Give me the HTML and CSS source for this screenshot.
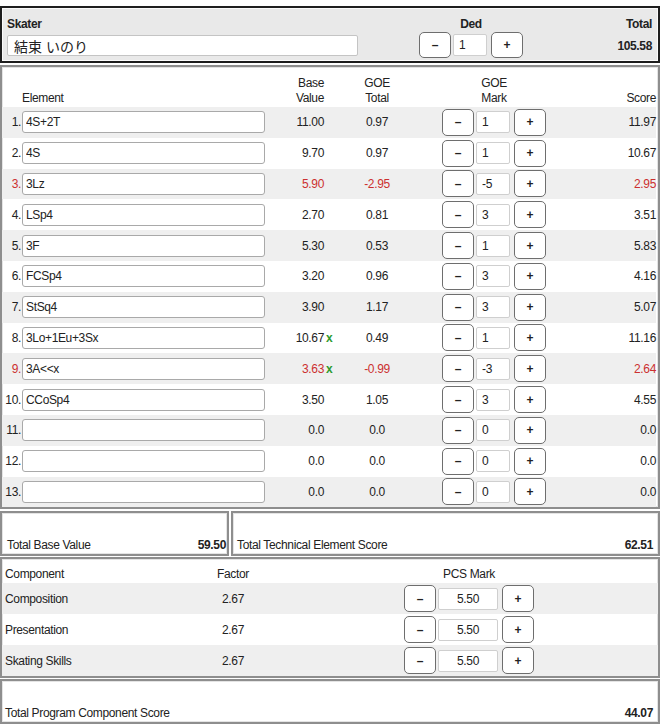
FILE: index.html
```html
<!DOCTYPE html>
<html lang="ja">
<head>
<meta charset="utf-8">
<title>Score Calculator</title>
<link rel="stylesheet" href="styles.css">
</head>
<body>
<div class="page">
  <div class="top">
    <div class="skater">
      <div class="lbl">Skater</div>
      <input class="name" type="text" value="結束 いのり">
    </div>
    <div class="ded">
      <div class="lbl">Ded</div>
      <div class="stepper">
        <button class="btn">–</button><input class="num-in ded-in" type="text" value="1"><button class="btn">+</button>
      </div>
    </div>
    <div class="total">
      <div class="lbl">Total</div>
      <div class="total-val">105.58</div>
    </div>
  </div>

  <div class="panel elements">
    <div class="erow head">
      <div></div>
      <div class="c-left">Element</div>
      <div class="c-right">Base<br>Value</div>
      <div></div>
      <div class="c-center">GOE<br>Total</div>
      <div class="c-center">GOE<br>Mark</div>
      <div class="c-right">Score</div>
    </div>

    <div class="erow alt">
      <div class="c-num">1.</div><input class="el-in" type="text" value="4S+2T">
      <div class="c-right">11.00</div><div class="xm"></div><div class="c-center">0.97</div>
      <div class="c-center"><div class="stepper"><button class="btn">–</button><input class="num-in" type="text" value="1"><button class="btn">+</button></div></div>
      <div class="c-right">11.97</div>
    </div>
    <div class="erow">
      <div class="c-num">2.</div><input class="el-in" type="text" value="4S">
      <div class="c-right">9.70</div><div class="xm"></div><div class="c-center">0.97</div>
      <div class="c-center"><div class="stepper"><button class="btn">–</button><input class="num-in" type="text" value="1"><button class="btn">+</button></div></div>
      <div class="c-right">10.67</div>
    </div>
    <div class="erow alt bad">
      <div class="c-num">3.</div><input class="el-in" type="text" value="3Lz">
      <div class="c-right">5.90</div><div class="xm"></div><div class="c-center">-2.95</div>
      <div class="c-center"><div class="stepper"><button class="btn">–</button><input class="num-in" type="text" value="-5"><button class="btn">+</button></div></div>
      <div class="c-right">2.95</div>
    </div>
    <div class="erow">
      <div class="c-num">4.</div><input class="el-in" type="text" value="LSp4">
      <div class="c-right">2.70</div><div class="xm"></div><div class="c-center">0.81</div>
      <div class="c-center"><div class="stepper"><button class="btn">–</button><input class="num-in" type="text" value="3"><button class="btn">+</button></div></div>
      <div class="c-right">3.51</div>
    </div>
    <div class="erow alt">
      <div class="c-num">5.</div><input class="el-in" type="text" value="3F">
      <div class="c-right">5.30</div><div class="xm"></div><div class="c-center">0.53</div>
      <div class="c-center"><div class="stepper"><button class="btn">–</button><input class="num-in" type="text" value="1"><button class="btn">+</button></div></div>
      <div class="c-right">5.83</div>
    </div>
    <div class="erow">
      <div class="c-num">6.</div><input class="el-in" type="text" value="FCSp4">
      <div class="c-right">3.20</div><div class="xm"></div><div class="c-center">0.96</div>
      <div class="c-center"><div class="stepper"><button class="btn">–</button><input class="num-in" type="text" value="3"><button class="btn">+</button></div></div>
      <div class="c-right">4.16</div>
    </div>
    <div class="erow alt">
      <div class="c-num">7.</div><input class="el-in" type="text" value="StSq4">
      <div class="c-right">3.90</div><div class="xm"></div><div class="c-center">1.17</div>
      <div class="c-center"><div class="stepper"><button class="btn">–</button><input class="num-in" type="text" value="3"><button class="btn">+</button></div></div>
      <div class="c-right">5.07</div>
    </div>
    <div class="erow">
      <div class="c-num">8.</div><input class="el-in" type="text" value="3Lo+1Eu+3Sx">
      <div class="c-right">10.67</div><div class="xm">x</div><div class="c-center">0.49</div>
      <div class="c-center"><div class="stepper"><button class="btn">–</button><input class="num-in" type="text" value="1"><button class="btn">+</button></div></div>
      <div class="c-right">11.16</div>
    </div>
    <div class="erow alt bad">
      <div class="c-num">9.</div><input class="el-in" type="text" value="3A&lt;&lt;x">
      <div class="c-right">3.63</div><div class="xm">x</div><div class="c-center">-0.99</div>
      <div class="c-center"><div class="stepper"><button class="btn">–</button><input class="num-in" type="text" value="-3"><button class="btn">+</button></div></div>
      <div class="c-right">2.64</div>
    </div>
    <div class="erow">
      <div class="c-num">10.</div><input class="el-in" type="text" value="CCoSp4">
      <div class="c-right">3.50</div><div class="xm"></div><div class="c-center">1.05</div>
      <div class="c-center"><div class="stepper"><button class="btn">–</button><input class="num-in" type="text" value="3"><button class="btn">+</button></div></div>
      <div class="c-right">4.55</div>
    </div>
    <div class="erow alt">
      <div class="c-num">11.</div><input class="el-in" type="text" value="">
      <div class="c-right">0.0</div><div class="xm"></div><div class="c-center">0.0</div>
      <div class="c-center"><div class="stepper"><button class="btn">–</button><input class="num-in" type="text" value="0"><button class="btn">+</button></div></div>
      <div class="c-right">0.0</div>
    </div>
    <div class="erow">
      <div class="c-num">12.</div><input class="el-in" type="text" value="">
      <div class="c-right">0.0</div><div class="xm"></div><div class="c-center">0.0</div>
      <div class="c-center"><div class="stepper"><button class="btn">–</button><input class="num-in" type="text" value="0"><button class="btn">+</button></div></div>
      <div class="c-right">0.0</div>
    </div>
    <div class="erow alt">
      <div class="c-num">13.</div><input class="el-in" type="text" value="">
      <div class="c-right">0.0</div><div class="xm"></div><div class="c-center">0.0</div>
      <div class="c-center"><div class="stepper"><button class="btn">–</button><input class="num-in" type="text" value="0"><button class="btn">+</button></div></div>
      <div class="c-right">0.0</div>
    </div>
  </div>

  <div class="totals">
    <div class="tbox tbv"><span>Total Base Value</span><b>59.50</b></div>
    <div class="tbox tes"><span>Total Technical Element Score</span><b>62.51</b></div>
  </div>

  <div class="panel comps">
    <div class="crow head">
      <div class="c-name">Component</div>
      <div class="c-center">Factor</div>
      <div></div>
      <div class="c-center">PCS Mark</div>
    </div>
    <div class="crow alt">
      <div class="c-name">Composition</div>
      <div class="c-center">2.67</div>
      <div></div>
      <div class="c-center"><div class="stepper"><button class="btn">–</button><input class="num-in pcs-in" type="text" value="5.50"><button class="btn">+</button></div></div>
    </div>
    <div class="crow">
      <div class="c-name">Presentation</div>
      <div class="c-center">2.67</div>
      <div></div>
      <div class="c-center"><div class="stepper"><button class="btn">–</button><input class="num-in pcs-in" type="text" value="5.50"><button class="btn">+</button></div></div>
    </div>
    <div class="crow alt">
      <div class="c-name">Skating Skills</div>
      <div class="c-center">2.67</div>
      <div></div>
      <div class="c-center"><div class="stepper"><button class="btn">–</button><input class="num-in pcs-in" type="text" value="5.50"><button class="btn">+</button></div></div>
    </div>
  </div>

  <div class="tbox pcs-total"><span>Total Program Component Score</span><b>44.07</b></div>
</div>
</body>
</html>
```
FILE: styles.css
```css
* { box-sizing: border-box; }
body {
  margin: 0;
  font-family: "Liberation Sans", Arial, sans-serif;
  font-size: 12px;
  letter-spacing: -0.35px;
  color: #222;
  background: #fff;
}
.page { width: 660px; padding-top: 6px; }

/* top panel */
.top {
  height: 57px;
  border: 2px solid #1e1e1e;
  box-shadow: inset 0 0 0 1px #fafafa;
  background: #e9e9e9;
  display: flex;
  align-items: flex-start;
  padding: 9px 6px 0 5px;
  margin-bottom: 2px;
}
.lbl { font-weight: bold; line-height: 14px; }
.skater { width: 351px; }
.skater .lbl { margin-bottom: 4px; }
.name {
  display: block;
  width: 351px;
  height: 21px;
  border: 1px solid #c4c4c4;
  border-radius: 2px;
  background: #fff;
  padding: 0 6px;
  font-family: "Liberation Sans", "Noto Sans CJK JP", sans-serif;
  font-size: 14px;
  letter-spacing: 0;
  color: #222;
}
.ded { margin-left: 61px; width: 104px; text-align: center; }
.ded .lbl { margin-bottom: 1px; }
.total { margin-left: auto; text-align: right; }
.total-val { font-weight: bold; line-height: 14px; margin-top: 8px; }

/* steppers */
.stepper { display: inline-flex; align-items: center; vertical-align: middle; }
.btn {
  width: 32px;
  height: 27px;
  padding: 0;
  border: 1px solid #6e6e6e;
  border-radius: 5px;
  background: #fff;
  font-family: "Liberation Sans", Arial, sans-serif;
  font-size: 12px;
  font-weight: bold;
  color: #222;
}
.top .btn { height: 26px; }
.num-in {
  width: 34px;
  height: 22px;
  margin: 0 4px 0 2px;
  border: 1px solid #cfcfcf;
  border-radius: 2px;
  background: #fff;
  padding: 0 5px;
  font-family: "Liberation Sans", Arial, sans-serif;
  font-size: 12px;
  letter-spacing: -0.35px;
  color: #222;
}
.pcs-in { width: 60px; text-align: center; }

/* panels */
.panel {
  border: 2px solid #8e8e8e;
  box-shadow: inset 0 0 0 1px #e4e4e4;
  background: #fff;
}
.elements { padding: 0 2px 0 0; }
.erow {
  display: grid;
  grid-template-columns: 20px 243px 59px 23px 60px 174px 75px;
  align-items: center;
  height: 30.8px;
}
.erow.head {
  height: 40px;
  align-items: end;
  line-height: 15px;
  padding-bottom: 1px;
}
.alt { background: #efefef; }
.c-num { text-align: right; padding-right: 1px; }
.c-right { text-align: right; }
.c-center { text-align: center; }
.c-left { text-align: left; }
.xm { color: #2e9a2e; font-weight: bold; padding-left: 2px; }
.bad .c-num, .bad .c-right, .bad > .c-center:nth-child(5) { color: #cc3030; }
.el-in {
  width: 243px;
  height: 22px;
  border: 1px solid #a9a9a9;
  border-radius: 3px;
  background: #fff;
  padding: 0 3px;
  font-family: "Liberation Sans", Arial, sans-serif;
  font-size: 12px;
  letter-spacing: -0.35px;
  color: #222;
}

/* totals */
.totals { display: flex; gap: 2px; margin-top: 2px; }
.tbox {
  height: 45px;
  border: 2px solid #8e8e8e;
  box-shadow: inset 0 0 0 1px #e4e4e4;
  display: flex;
  align-items: flex-end;
  justify-content: space-between;
  line-height: 14px;
  padding-bottom: 2px;
}
.tbv { width: 229px; padding-left: 5px; padding-right: 1px; }
.tes { flex: 1; padding-left: 4px; padding-right: 5px; }
.pcs-total { margin-top: 1px; padding-left: 3px; padding-right: 5px; }

/* components */
.comps { margin-top: 1px; }
.crow {
  display: grid;
  grid-template-columns: 198px 66px 134px 138px 1fr;
  align-items: center;
  height: 31px;
}
.crow.head { height: 24px; align-items: end; padding-bottom: 2px; }
.c-name { padding-left: 3px; }
```
